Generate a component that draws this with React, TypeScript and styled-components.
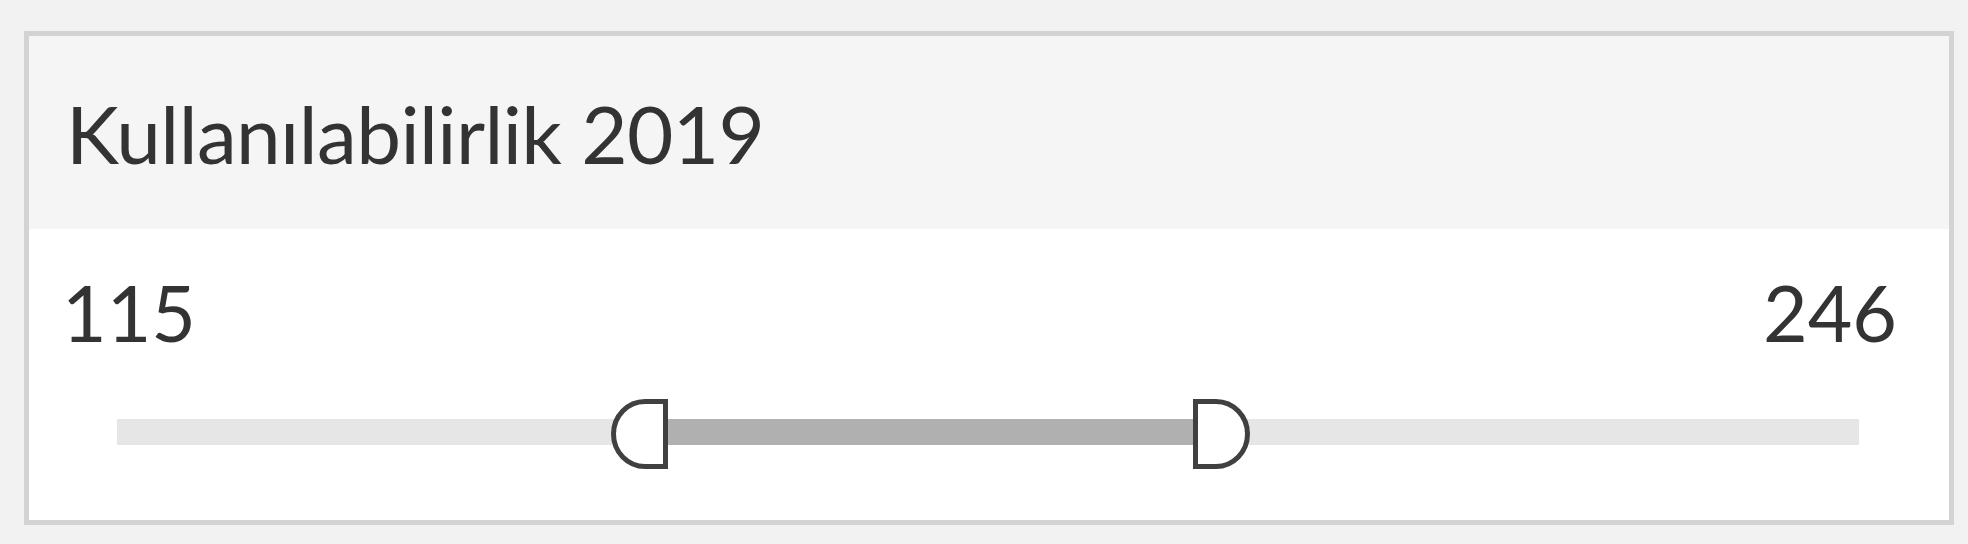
import React from 'react';
import styled, {createGlobalStyle} from "styled-components";

const GlobalStyle = createGlobalStyle`
    html, body {
        margin: 0;
        padding: 0;
        background: #f2f2f2;
        font-family: Lato, "Liberation Sans", sans-serif;
        color: #333333;
    }
`;

const Page = styled.div`
       width: 1968px;
       height: 544px;
       padding: 31px 0 0 24px;
       box-sizing: border-box;
`;

const Card = styled.div`
       display: flex;
       flex-direction: column;
       width: 1930px;
       height: 494px;
       box-sizing: border-box;
       border: 5px solid #d3d3d3;
       background: #ffffff;
`;

const Header = styled.div`
       display: flex;
       align-items: center;
       height: 193px;
       padding-left: 37px;
       padding-top: 1px;
       box-sizing: border-box;
       background: #f5f5f5;
`;

const Title = styled.div`
       font-size: 80px;
       line-height: 1;
       letter-spacing: -0.6px;
       color: #333333;
`;

const Body = styled.div`
       display: flex;
       flex-direction: column;
       padding: 45px 52px 0 33px;
`;

const Values = styled.div`
       display: flex;
       justify-content: space-between;
       font-size: 77px;
       line-height: 77px;
       color: #333333;
`;

const Slider = styled.div`
       position: relative;
       height: 70px;
       margin: 48px 38px 0 55px;
       display: flex;
       align-items: center;
`;

const Track = styled.div`
       width: 100%;
       height: 26px;
       margin-top: -4px;
       background: #e6e6e6;
`;

const Fill = styled.div`
       position: absolute;
       top: 20px;
       height: 26px;
       background: #b0b0b0;
`;

const Handle = styled.svg<{$side: 'left' | 'right'}>`
       position: absolute;
       top: 0;
       width: 57px;
       height: 70px;
       transform: translateX(${p => p.$side === 'left' ? '-100%' : '0'});
`;

function App() {
    const min = 115;
    const max = 246;
    const low = 156.4;
    const high = 195.9;
    const lowPct = ((low - min) / (max - min)) * 100;
    const highPct = ((high - min) / (max - min)) * 100;

    return (
        <Page>
            <GlobalStyle/>
            <Card>
                <Header>
                    <Title>Kullanılabilirlik 2019</Title>
                </Header>
                <Body>
                    <Values>
                        <span>{min}</span>
                        <span>{max}</span>
                    </Values>
                    <Slider>
                        <Track/>
                        <Fill style={{left: `${lowPct}%`, width: `${highPct - lowPct}%`}}/>
                        <Handle $side="left" viewBox="0 0 57 70" style={{left: `${lowPct}%`}}>
                            <path d="M54.5 2.5 L54.5 67.5 L34 67.5 A31.5 32.5 0 0 1 34 2.5 Z" fill="#ffffff"
                                  stroke="#404040" strokeWidth="5"/>
                        </Handle>
                        <Handle $side="right" viewBox="0 0 57 70" style={{left: `${highPct}%`}}>
                            <path d="M2.5 2.5 L2.5 67.5 L23 67.5 A31.5 32.5 0 0 0 23 2.5 Z" fill="#ffffff"
                                  stroke="#404040" strokeWidth="5"/>
                        </Handle>
                    </Slider>
                </Body>
            </Card>
        </Page>
    );
}

export default App;
